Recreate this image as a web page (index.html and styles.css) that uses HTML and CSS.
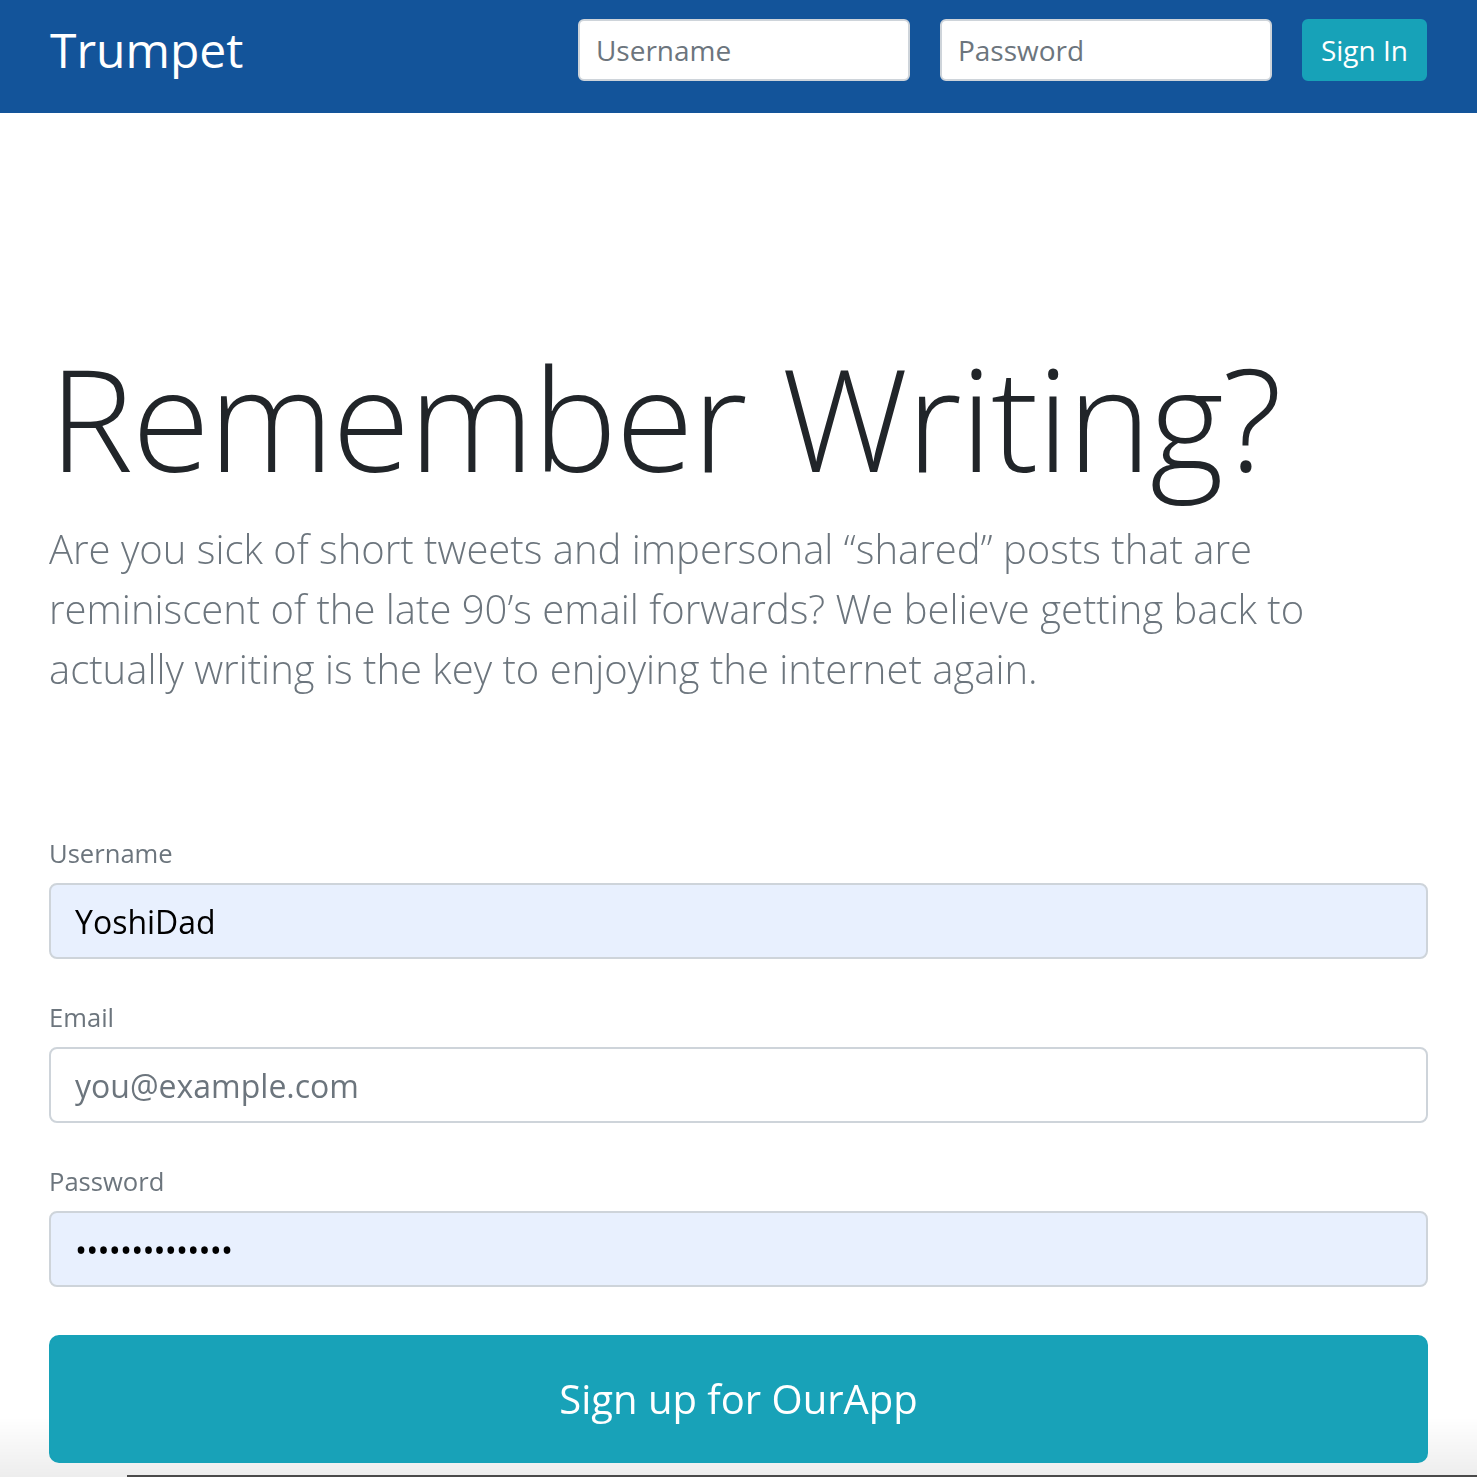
FILE: index.html
```html
<!DOCTYPE html>
<html lang="en">
<head>
<meta charset="utf-8">
<title>Trumpet</title>
<link rel="stylesheet" href="styles.css">
</head>
<body>
<header class="topbar">
  <h4 class="brand">Trumpet</h4>
  <form class="signin">
    <input class="field-sm" type="text" placeholder="Username">
    <input class="field-sm" type="password" placeholder="Password">
    <button class="btn-sm" type="button">Sign In</button>
  </form>
</header>
<main class="page">
  <h1 class="display">Remember Writing?</h1>
  <p class="lead">Are you sick of short tweets and impersonal “shared” posts that are reminiscent of the late 90’s email forwards? We believe getting back to actually writing is the key to enjoying the internet again.</p>
  <form class="signup">
    <div class="group">
      <label class="label"><span class="small">Username</span></label>
      <input class="field autofill" type="text" value="YoshiDad">
    </div>
    <div class="group">
      <label class="label"><span class="small">Email</span></label>
      <input class="field" type="text" placeholder="you@example.com">
    </div>
    <div class="group">
      <label class="label"><span class="small">Password</span></label>
      <input class="field autofill dots" type="password" value="abcdefghijklmn">
    </div>
    <button class="btn-lg" type="button">Sign up for OurApp</button>
  </form>
</main>
<div class="shade"><div class="edge"></div></div>
</body>
</html>
```
FILE: styles.css
```css
html, body {
  margin: 0;
  padding: 0;
  background: #fff;
}
body {
  font-family: "Open Sans", "Liberation Sans", sans-serif;
  color: #212529;
  overflow: hidden;
}
.topbar {
  background: #13549a;
  display: flex;
  align-items: center;
  justify-content: space-between;
  padding: 19px 50px 32px 50px;
  height: 62px;
}
.brand {
  margin: 0;
  color: #fff;
  font-weight: 400;
  font-size: 48px;
  line-height: 1.2;
}
.signin {
  display: flex;
  gap: 30px;
  margin: 0;
}
.field-sm {
  box-sizing: border-box;
  width: 332px;
  height: 62px;
  font-family: inherit;
  font-size: 28px;
  line-height: 42px;
  padding: 8px 16px;
  border: 2px solid #ced4da;
  border-radius: 6px;
  background: #fff;
  color: #495057;
  outline: none;
}
.field-sm::placeholder, .field::placeholder {
  color: #6c757d;
  opacity: 1;
}
.btn-sm {
  box-sizing: border-box;
  height: 62px;
  font-family: inherit;
  font-size: 28px;
  line-height: 42px;
  padding: 8px 17px;
  border: 2px solid #17a2b8;
  border-radius: 6px;
  background: #17a2b8;
  color: #fff;
}
.page {
  padding: 218px 49px 0 49px;
  position: relative;
  z-index: 1;
}
.display {
  margin: 0 0 16px 0;
  font-size: 142px;
  letter-spacing: -1.5px;
  font-weight: 300;
  line-height: 172px;
  color: #212529;
}
.lead {
  margin: 0;
  font-size: 40px;
  font-weight: 300;
  line-height: 60px;
  color: #6c757d;
}
.signup {
  margin-top: 128px;
}
.group {
  margin-bottom: 32px;
}
.label {
  display: block;
  font-size: 32px;
  line-height: 48px;
  height: 48px;
  color: #6c757d;
  margin-bottom: 8px;
}
.small {
  font-size: 80%;
  line-height: 1;
}
.field {
  display: block;
  box-sizing: border-box;
  width: 100%;
  height: 76px;
  font-family: inherit;
  font-size: 32px;
  line-height: 48px;
  padding: 12px 24px;
  border: 2px solid #ced4da;
  border-radius: 8px;
  background: #fff;
  color: #495057;
  outline: none;
}
.autofill {
  background: #e8f0fe;
  color: #000;
}
.dots {
  letter-spacing: -0.8px;
}
.btn-lg {
  display: block;
  box-sizing: border-box;
  width: 100%;
  margin-top: 48px;
  font-family: inherit;
  font-size: 40px;
  line-height: 60px;
  padding: 32px;
  border: 2px solid #17a2b8;
  border-radius: 10px;
  background: #18a2b8;
  color: #fff;
}
.shade {
  position: fixed;
  left: 0;
  right: 0;
  bottom: 0;
  height: 60px;
  background: linear-gradient(to bottom, rgba(0,0,0,0), rgba(0,0,0,0.07));
  z-index: 0;
  display: flex;
  align-items: flex-end;
}
.edge {
  margin-left: 127px;
  flex: 1;
  height: 2px;
  background: #4a4a4a;
}
```
